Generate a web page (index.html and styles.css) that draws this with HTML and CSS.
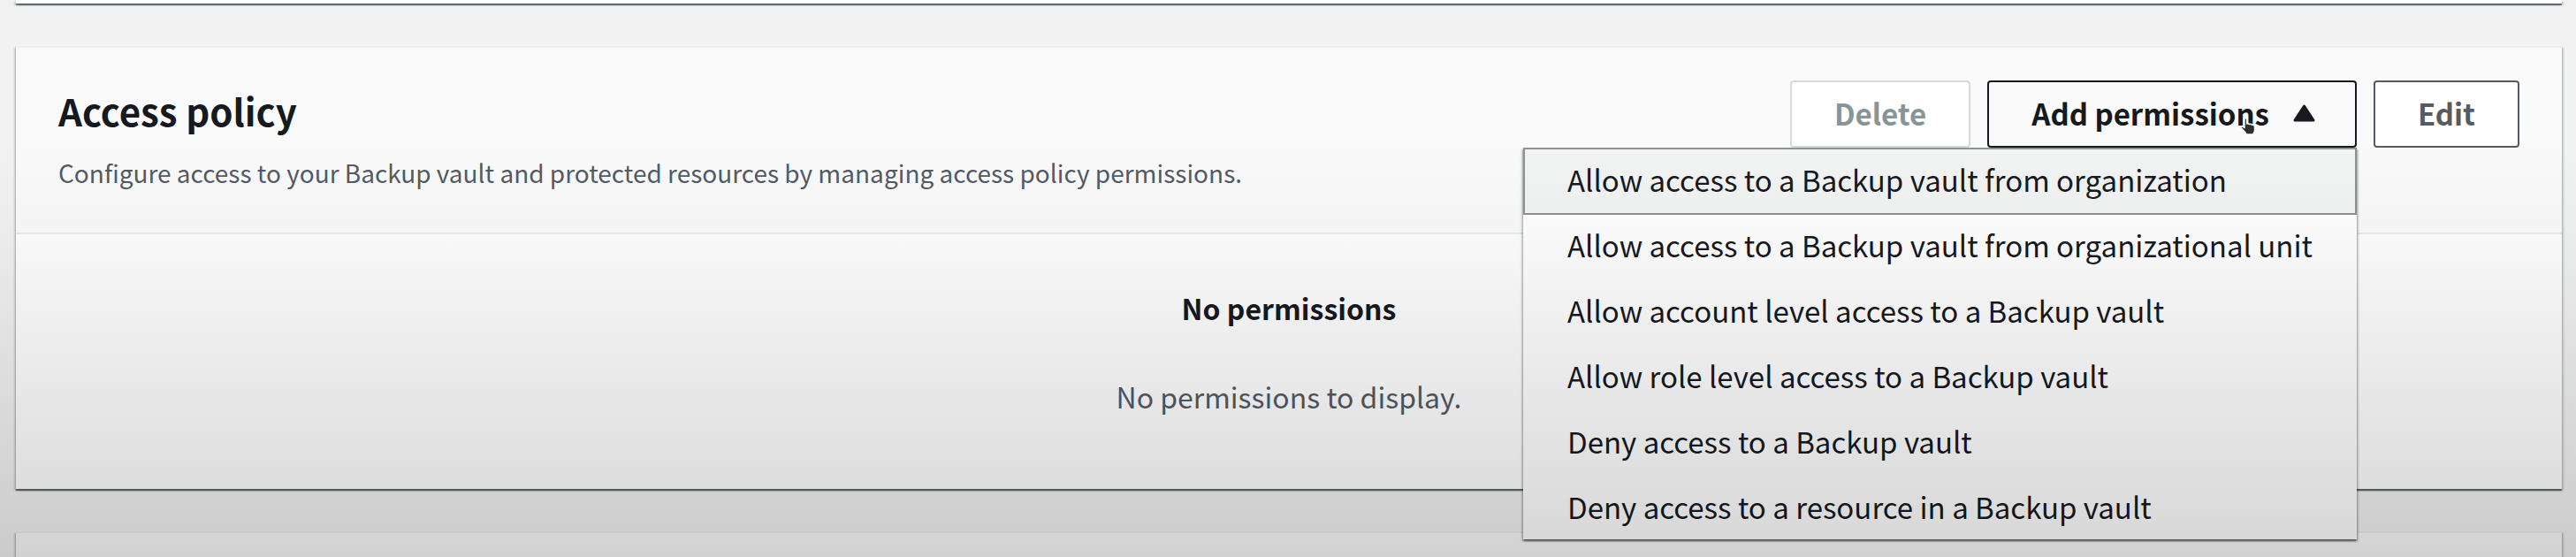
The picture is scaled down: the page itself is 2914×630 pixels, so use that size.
FILE: index.html
```html
<!DOCTYPE html>
<html lang="en">
<head>
<meta charset="utf-8">
<title>Backup vault</title>
<link rel="stylesheet" href="styles.css">
</head>
<body>
<main class="page">
  <section class="card card-previous"></section>

  <section class="card" aria-labelledby="policy-title">
    <header class="card-header">
      <div class="heading">
        <h2 class="title" id="policy-title">Access policy</h2>
        <p class="description">Configure access to your Backup vault and protected resources by managing access policy permissions.</p>
      </div>
      <div class="actions">
        <button class="button" type="button" disabled>Delete</button>
        <div class="dropdown">
          <button class="button button-open" type="button" aria-haspopup="menu" aria-expanded="true" aria-controls="permissions-menu">
            Add permissions
            <svg class="caret" viewBox="0 0 25 20" aria-hidden="true"><path d="M12.500 2 L23 18 H2 Z" fill="currentColor" stroke="currentColor" stroke-width="3" stroke-linejoin="round"/></svg>
            <svg class="pointer" viewBox="0 0 20 22" aria-hidden="true"><path d="M6 3 Q6 1.500 7.300 1.500 Q8.600 1.500 8.600 3 V8 Q10.500 7.200 11.500 8.500 Q13.500 7.800 14.500 9.300 Q17.500 9 17.500 12 V15.500 Q17.500 17 16.300 18.500 V20 H7.500 V18.500 L2 12.500 Q1.500 10.800 3.500 10.800 L6 12.500 Z" fill="#2e2e2e" stroke="#fff" stroke-width="1.400" stroke-linejoin="round"/></svg>
          </button>
          <ul class="menu" id="permissions-menu" role="menu">
            <li role="none"><button class="menu-item menu-item-active" role="menuitem" type="button">Allow access to a Backup vault from organization</button></li>
            <li role="none"><button class="menu-item" role="menuitem" type="button">Allow access to a Backup vault from organizational unit</button></li>
            <li role="none"><button class="menu-item" role="menuitem" type="button">Allow account level access to a Backup vault</button></li>
            <li role="none"><button class="menu-item" role="menuitem" type="button">Allow role level access to a Backup vault</button></li>
            <li role="none"><button class="menu-item" role="menuitem" type="button">Deny access to a Backup vault</button></li>
            <li role="none"><button class="menu-item" role="menuitem" type="button">Deny access to a resource in a Backup vault</button></li>
          </ul>
        </div>
        <button class="button" type="button">Edit</button>
      </div>
    </header>
    <div class="empty">
      <p class="empty-title">No permissions</p>
      <p class="empty-text">No permissions to display.</p>
    </div>
  </section>

  <section class="card card-next"></section>
</main>
</body>
</html>
```
FILE: styles.css
```css
* {
  box-sizing: border-box;
}

body {
  margin: 0;
  background: #f2f2f2;
  color: #16191f;
  font: 33px/40px "Noto Sans CJK SC", "Noto Sans", sans-serif;
}

.page {
  position: relative;
  display: flex;
  flex-direction: column;
  gap: 48px;
  height: 100vh;
  overflow: hidden;
  padding: 0 16px 0 18px;
}

/* Shade that deepens towards the bottom of the view */
.page::after {
  content: "";
  position: absolute;
  inset: 0;
  z-index: 10;
  pointer-events: none;
  background: linear-gradient(rgba(0, 0, 0, 0) 25%, rgba(0, 0, 0, 0.025) 41%, rgba(0, 0, 0, 0.15) 95%, rgba(0, 0, 0, 0.16));
}

.card {
  flex: none;
  border-top: 2px solid #eaeded;
  background: #fff;
  box-shadow:
    0 2px 1px rgba(0, 28, 36, 0.5),
    2px 2px 2px rgba(0, 28, 36, 0.18),
    -2px 2px 2px rgba(0, 28, 36, 0.18);
}

.card-previous {
  height: 4px;
  border-top: 0;
}

.card-next {
  flex: 1 0 auto;
  background: #fafafa;
}

.card-header {
  display: flex;
  justify-content: space-between;
  align-items: flex-start;
  padding: 37px 48px 48px;
  border-bottom: 2px solid #eaeded;
  background: #fafafa;
}

.heading {
  display: grid;
  gap: 25px;
  padding-top: 9px;
}

.title {
  margin: 0;
  font-size: 42px;
  line-height: 50px;
}

.description {
  margin: 0;
  color: #545b64;
  font-size: 28px;
}

.actions {
  display: flex;
  gap: 19px;
}

.button {
  position: relative;
  display: flex;
  align-items: center;
  gap: 24px;
  padding: 15px 48px 17px;
  border: 2px solid #545b64;
  border-radius: 4px;
  background: #fff;
  color: #545b64;
  font: inherit;
  font-weight: 700;
  white-space: nowrap;
}

.button:disabled {
  border-color: #d5dbdb;
  color: #879596;
}

.button-open {
  gap: 27px;
  padding-right: 45px;
  border-color: #16191f;
  background: #fafafa;
  color: #16191f;
}

.caret {
  width: 25px;
  height: 20px;
}

.pointer {
  position: absolute;
  left: 283px;
  top: 39px;
  width: 20px;
  height: 22px;
}

.dropdown {
  position: relative;
}

.menu {
  position: absolute;
  top: 100%;
  right: 0;
  z-index: 5;
  margin: 0;
  padding: 0;
  list-style: none;
  background: #fff;
  box-shadow:
    0 2px 2px rgba(0, 0, 0, 0.5),
    2px 2px 2px rgba(0, 28, 36, 0.15),
    -2px 2px 2px rgba(0, 28, 36, 0.15);
}

.menu-item {
  display: block;
  width: 100%;
  margin-bottom: -2px;
  padding: 14px 48px 18px;
  border: 2px solid transparent;
  background: none;
  color: inherit;
  font: inherit;
  text-align: left;
  white-space: nowrap;
}

.menu li:last-child .menu-item {
  margin-bottom: 0;
  padding-bottom: 15px;
}

.menu-item-active {
  border-color: #8f9292;
  background: #f2f3f3;
}

.empty {
  display: grid;
  gap: 60px;
  padding: 63px 48px 85px;
  font-size: 32px;
  text-align: center;
}

.empty-title,
.empty-text {
  margin: 0;
}

.empty-title {
  font-weight: 700;
}

.empty-text {
  color: #545b64;
}
```
